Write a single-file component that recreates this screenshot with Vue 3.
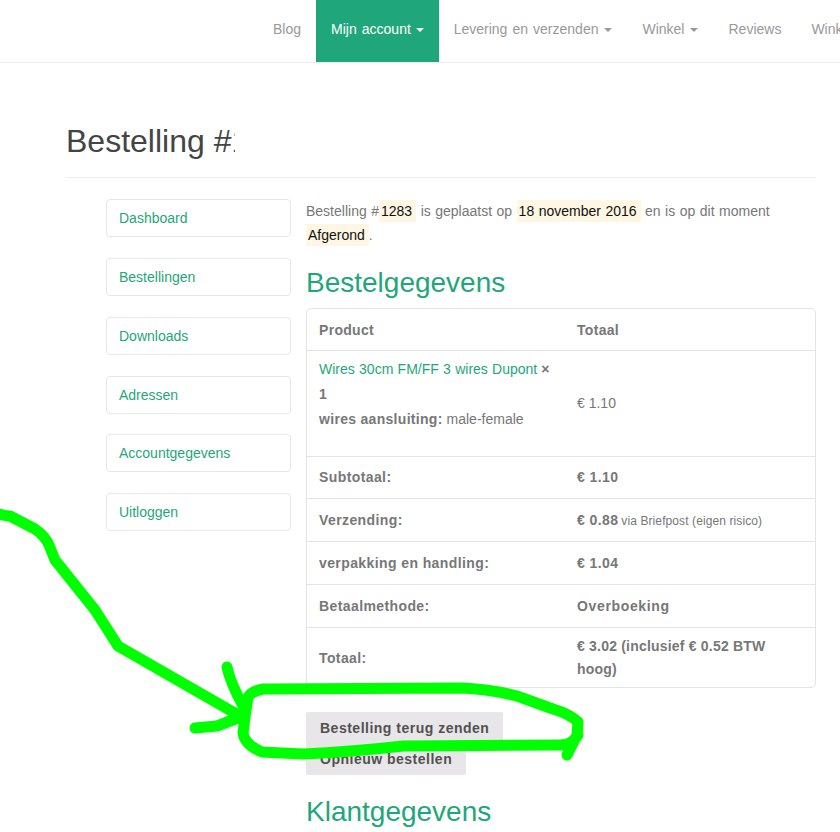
<script setup>
const navItems = [
  { label: 'Blog' },
  { label: 'Mijn account', caret: true, active: true },
  { label: 'Levering en verzenden', caret: true },
  { label: 'Winkel', caret: true },
  { label: 'Reviews' },
  { label: 'Winkelwagen' }
]

const accountLinks = ['Dashboard', 'Bestellingen', 'Downloads', 'Adressen', 'Accountgegevens', 'Uitloggen']

const totals = [
  { label: 'Subtotaal:', value: '€ 1.10' },
  { label: 'Verzending:', value: '€ 0.88', note: 'via Briefpost (eigen risico)' },
  { label: 'verpakking en handling:', value: '€ 1.04' },
  { label: 'Betaalmethode:', value: 'Overboeking', wide: true }
]
</script>

<template>
  <div class="page">
    <nav class="navbar">
      <a
        v-for="item in navItems"
        :key="item.label"
        class="nav-link"
        :class="{ active: item.active }"
      >
        {{ item.label }}<span v-if="item.caret" class="caret"></span>
      </a>
    </nav>

    <main class="container">
      <header class="page-header">
        <h1 class="page-title">Bestelling #1283</h1>
      </header>

      <div class="account">
        <aside class="account-nav">
          <a v-for="link in accountLinks" :key="link" class="account-link">{{ link }}</a>
        </aside>

        <section class="account-content">
          <p class="order-status">
            Bestelling #<mark>1283</mark> is geplaatst op <mark>18 november 2016</mark> en is op dit moment
            <mark>Afgerond</mark>.
          </p>

          <h2 class="section-title">Bestelgegevens</h2>

          <div class="table-wrap">
            <table class="order-table">
              <thead>
                <tr>
                  <th>Product</th>
                  <th>Totaal</th>
                </tr>
              </thead>
              <tbody>
                <tr class="item-row">
                  <td>
                    <a class="product-link">Wires 30cm FM/FF 3 wires Dupont</a> <strong class="qty">× 1</strong>
                    <div class="item-meta"><strong>wires aansluiting:</strong> male-female</div>
                  </td>
                  <td class="item-price">€ 1.10</td>
                </tr>
                <tr v-for="row in totals" :key="row.label">
                  <th>{{ row.label }}</th>
                  <td>
                    <strong :class="{ wide: row.wide }">{{ row.value }}</strong>
                    <small v-if="row.note" class="note">{{ row.note }}</small>
                  </td>
                </tr>
                <tr class="total-row">
                  <th>Totaal:</th>
                  <td><strong>€ 3.02 (inclusief € 0.52 BTW hoog)</strong></td>
                </tr>
              </tbody>
            </table>
          </div>

          <div class="order-actions">
            <button class="btn">Bestelling terug zenden</button>
            <button class="btn">Opnieuw bestellen</button>
          </div>

          <h2 class="section-title customer-title">Klantgegevens</h2>
        </section>
      </div>
    </main>

    <!-- hand drawn annotation on top of the screenshot -->
    <svg class="scribble" width="840" height="832" viewBox="0 0 840 832" fill="none">
      <g stroke="#00ff00" stroke-width="11" stroke-linecap="round" stroke-linejoin="round">
        <path d="M-4 513 Q4 516 10 516 L35 529 Q45 536 49 545 L55 560 L95 610 L118 646 L240 716" />
        <path d="M227 667 Q230 682 243 706" />
        <path d="M195 728 Q205 727 217 726 L243 716" />
        <path d="M245 717 L248 697 Q252 691 263 689 L463 688 Q495 690 517 696 L553 709 Q570 714 578 722 L577 735 L567 755 M578 735 Q572 745 560 745 L403 746 Q350 752 303 754 L262 752 Q245 745 243 733 L245 717" />
      </g>
    </svg>
  </div>
</template>

<style scoped>
.page {
  position: relative;
  width: 840px;
  height: 832px;
  overflow: hidden;
  background: #fff;
  color: #777;
  font-family: "Liberation Sans", Arial, sans-serif;
  font-size: 14px;
}

.navbar {
  display: flex;
  height: 62px;
  padding-left: 258px;
  border-bottom: 1px solid #eee;
  white-space: nowrap;
}

.nav-link {
  display: flex;
  align-items: center;
  flex-shrink: 0;
  padding: 0 15px 4px;
  color: #999;
  word-spacing: 1.2px;
}

.nav-link.active {
  background: #1fa67a;
  color: #fff;
}

.caret {
  width: 0;
  height: 0;
  margin-left: 6px;
  margin-top: 1px;
  border-top: 4px solid currentColor;
  border-left: 4px solid transparent;
  border-right: 4px solid transparent;
}

.nav-link.active .caret {
  margin-left: 4.8px;
}

.container {
  padding: 0 24px 0 66px;
}

.page-header {
  padding: 58px 0 16px;
  border-bottom: 1px solid #eee;
}

.page-title {
  width: 169px;
  margin: 0;
  overflow: hidden;
  color: #444;
  font-size: 32px;
  font-weight: 400;
  line-height: 40px;
  white-space: nowrap;
}

.account {
  display: flex;
  padding: 21px 0 0 40px;
}

.account-nav {
  display: flex;
  flex-direction: column;
  flex-shrink: 0;
  width: 185px;
  gap: 20.85px;
  margin-right: 15px;
}

.account-link {
  height: 38px;
  box-sizing: border-box;
  padding: 0 12px;
  border: 1px solid #e7e7e7;
  border-radius: 4px;
  color: #1fa67a;
  line-height: 36px;
}

.account-content {
  width: 510px;
}

.order-status {
  margin: 0;
  line-height: 24px;
  word-spacing: 0.6px;
}

.order-status mark {
  padding: 3px 4px 3px 2px;
  background: #fff6e3;
  color: #111;
}

.section-title {
  margin: 19px 0 8px;
  color: #1fa67a;
  font-size: 28px;
  font-weight: 400;
  line-height: 34px;
}

.table-wrap {
  border: 1px solid #e4e4e4;
  border-radius: 5px;
}

.order-table {
  width: 100%;
  table-layout: fixed;
  border-collapse: collapse;
}

.order-table th,
.order-table td {
  padding: 9px 12px;
  line-height: 24px;
  text-align: left;
  vertical-align: middle;
}

.order-table th:first-child,
.order-table td:first-child {
  width: 234px;
}

.order-table thead th {
  padding-bottom: 8px;
  letter-spacing: 0.3px;
}

.order-table tbody tr {
  border-top: 1px solid #e4e4e4;
}

.order-table tbody th,
.order-table strong {
  letter-spacing: 0.4px;
}

.order-table strong.wide {
  letter-spacing: 0.65px;
}

.item-row td {
  padding-top: 6px;
  line-height: 25px;
}

.order-table .item-price {
  padding-top: 8px;
}

.item-row + tr th,
.item-row + tr td {
  padding-top: 8px;
}

.order-table .item-meta {
  margin-bottom: 15px;
}

.order-table .item-meta strong {
  letter-spacing: 0.3px;
}

.product-link {
  color: #1fa67a;
  word-spacing: 0.4px;
}

.note {
  margin-left: 3px;
  font-size: 12px;
  line-height: 1;
  letter-spacing: 0.1px;
}

.total-row th,
.total-row td {
  padding-top: 7px;
  padding-bottom: 6px;
  line-height: 23px;
}

.order-table .total-row strong {
  letter-spacing: 0.2px;
}

.order-actions {
  display: flex;
  flex-direction: column;
  align-items: flex-start;
  padding-top: 24px;
}

.btn {
  height: 32px;
  margin-bottom: -1px;
  padding: 0 14px;
  border: 0;
  border-radius: 2px;
  background: #e9e6ea;
  color: #515151;
  font-family: inherit;
  font-size: 14px;
  font-weight: 700;
  letter-spacing: 0.5px;
}

.customer-title {
  margin-top: 21px;
}

.scribble {
  position: absolute;
  top: 0;
  left: 0;
}
</style>

<style>
html,
body {
  margin: 0;
  overflow: hidden;
}
</style>
